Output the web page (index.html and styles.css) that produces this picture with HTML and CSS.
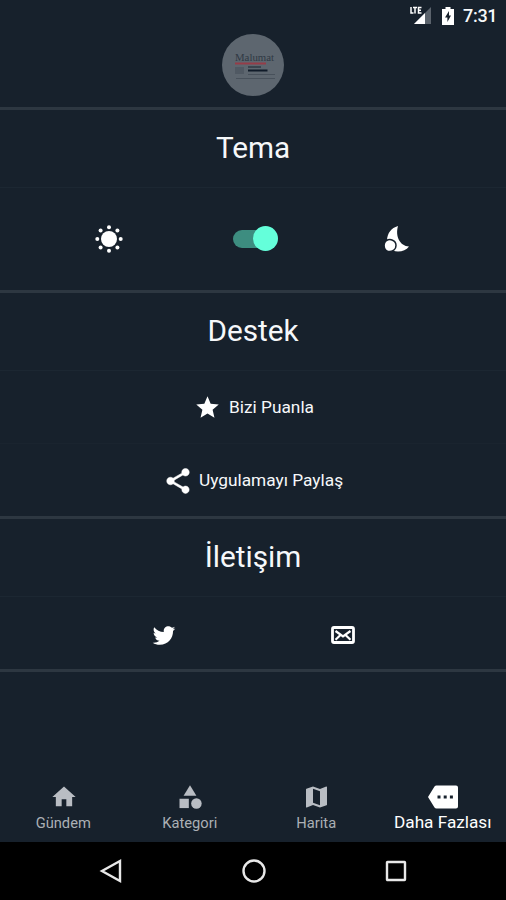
FILE: index.html
```html
<!DOCTYPE html>
<html lang="tr">
<head>
<meta charset="utf-8">
<title>Malumat</title>
<link rel="stylesheet" href="styles.css">
</head>
<body>
<div class="screen">
  <header class="statusbar">
    <svg class="signal" width="24" height="20" viewBox="0 0 24 20"><path fill="#5b636c" d="M22 1v17H5z"/><path fill="#fff" d="M16 7v11H5z"/><path d="M2.500 1v6.500h3M5 1.500h4M7 1.500v6.500M13 1.500h-3v6h3M10 4.500h2.500" fill="none" stroke="#17212c" stroke-width="3"/><path d="M2 1v6h2.500M4 1.500h4M6 1.500v6M12.500 1.500h-3v5.500h3M9.500 4.200h2.500" fill="none" stroke="#fff" stroke-width="1.500"/></svg>
    <svg class="battery" width="12" height="18" viewBox="0 0 12 18"><path fill="#fff" fill-rule="evenodd" d="M3.500 0h5v2H12v16H0V2h3.500zM7 4L3 10.500h2.400V15L9 8.500H7z"/></svg>
    <span class="clock">7:31</span>
  </header>
  <div class="brand">
    <svg width="64" height="64" viewBox="0 0 64 64"><circle cx="32" cy="32" r="31" fill="#5d666f"/><text class="brand-name" x="14" y="28" textLength="39" lengthAdjust="spacingAndGlyphs">Malumat</text><path d="M14 30.500h31" stroke="#963c48" stroke-width="2"/><path d="M14 34h9v7h-9z" fill="#505963"/><path d="M27 34h13" stroke="#28323d" stroke-width="1.300"/><path d="M27 37.500h19.500" stroke="#101b29" stroke-width="2"/><path d="M27 41.500h27M15 45.500h39" stroke="#48515b"/></svg>
  </div>
  <section class="theme">
    <h2>Tema</h2>
    <div class="theme-row">
      <svg width="30" height="30" viewBox="0 0 30 30" fill="#fff"><circle cx="15" cy="15" r="8"/><circle cx="15" cy="3.300" r="2"/><circle cx="15" cy="26.700" r="2"/><circle cx="3.300" cy="15" r="2"/><circle cx="26.700" cy="15" r="2"/><circle cx="6.600" cy="6.600" r="2"/><circle cx="23.400" cy="6.600" r="2"/><circle cx="6.600" cy="23.400" r="2"/><circle cx="23.400" cy="23.400" r="2"/></svg>
      <span class="switch"><i></i></span>
      <svg width="30" height="30" viewBox="0 0 30 30"><path fill="#fff" d="M16 2C9 4 5.500 9 5 16c0 7 4 11.500 11 11.500 4.500 0 8.500-1.500 11-5-9-.5-14-10-11-20.500z"/><path fill="#fff" stroke="#17212c" stroke-width="1.500" d="M4.500 16.500c3.500-2 9.500-.5 9.500 5 0 3.500-2.700 6-6 6-6.500 0-7.500-7.500-3.500-11z"/></svg>
    </div>
  </section>
  <section class="support">
    <h2>Destek</h2>
    <div class="link rate"><svg width="27" height="27" viewBox="0 0 24 24"><path fill="#fff" d="M12 17.270L18.180 21l-1.640-7.030L22 9.240l-7.190-.61L12 2 9.190 8.630 2 9.240l5.460 4.730L5.820 21z"/></svg><span class="rate-text">Bizi Puanla</span></div>
    <div class="link share"><svg width="30" height="30" viewBox="0 0 24 24"><path fill="#fff" stroke="#fff" stroke-width=".4" d="M18 16.080c-.76 0-1.440.3-1.960.77L8.910 12.700c.05-.23.09-.46.09-.7s-.04-.47-.09-.7l7.050-4.110c.54.5 1.250.81 2.040.81 1.660 0 3-1.340 3-3s-1.340-3-3-3-3 1.340-3 3c0 .24.04.47.09.7L8.040 9.810C7.500 9.310 6.790 9 6 9c-1.660 0-3 1.340-3 3s1.340 3 3 3c.79 0 1.500-.31 2.040-.81l7.120 4.160c-.05.21-.08.43-.08.65 0 1.610 1.310 2.920 2.920 2.920s2.920-1.310 2.920-2.920-1.310-2.920-2.920-2.920z"/></svg><span class="share-text">Uygulamayı Paylaş</span></div>
  </section>
  <section class="contact">
    <h2>İletişim</h2>
    <div class="contact-row">
      <svg width="26" height="26" viewBox="0 0 24 24"><path fill="#fff" d="M22.460 6c-.77.35-1.600.58-2.460.69.88-.53 1.560-1.370 1.880-2.380-.83.5-1.750.85-2.720 1.050C18.370 4.500 17.260 4 16 4c-2.350 0-4.270 1.920-4.270 4.290 0 .34.04.67.11.98C8.280 9.090 5.110 7.380 3 4.790c-.37.63-.58 1.370-.58 2.150 0 1.490.75 2.810 1.910 3.560-.71 0-1.370-.2-1.950-.5v.03c0 2.080 1.480 3.820 3.440 4.210a4.220 4.220 0 0 1-1.930.07 4.280 4.280 0 0 0 4 2.980 8.521 8.521 0 0 1-5.330 1.840c-.34 0-.68-.02-1.020-.06C3.440 20.290 5.700 21 8.120 21 16 21 20.330 14.460 20.330 8.790c0-.19 0-.37-.01-.56.84-.6 1.560-1.360 2.140-2.230z"/></svg>
      <svg width="26" height="20" viewBox="0 0 26 20"><rect x="2.500" y="2.500" width="21" height="15" rx="1.500" fill="none" stroke="#fff" stroke-width="2.800"/><path d="M5.500 6l7.500 5.500L20.500 6M5.500 14.800l5-4.800M20.500 14.800l-5-4.800" fill="none" stroke="#fff" stroke-width="2.200"/></svg>
    </div>
  </section>
  <nav class="tabs">
    <div class="tab"><svg width="28" height="28" viewBox="0 0 24 24"><path d="M10 20v-6h4v6h5v-8h3L12 3 2 12h3v8z"/></svg><span>Gündem</span></div>
    <div class="tab"><svg width="28" height="28" viewBox="0 0 24 24"><path d="M12 2l-5.500 9h11z"/><circle cx="17.500" cy="17.500" r="4.500"/><path d="M3 13.500h8v8H3z"/></svg><span>Kategori</span></div>
    <div class="tab"><svg width="31" height="31" viewBox="0 0 24 24"><path d="M20.500 3l-.16.030L15 5.100 9 3 3.360 4.900c-.21.070-.36.250-.36.480V20.500c0 .28.220.5.500.5l.16-.03L9 18.900l6 2.100 5.640-1.900c.21-.07.36-.25.36-.48V3.500c0-.28-.22-.5-.5-.5zM15 19l-6-2.110V5l6 2.110V19z"/></svg><span>Harita</span></div>
    <div class="tab active"><svg width="32" height="28" viewBox="0 0 32 28"><path fill-rule="evenodd" d="M9.500 2.500H29a2 2 0 0 1 2 2v19a2 2 0 0 1-2 2H9.500q-1.300 0-2-1L1 14l6.500-10.500q.7-1 2-1zM10.500 12.500v3h3v-3zm6.200 0v3h3v-3zm6.200 0v3h3v-3z"/></svg><span>Daha Fazlası</span></div>
  </nav>
  <footer class="system">
    <svg width="24" height="26" viewBox="0 0 24 26"><path d="M21 3v20L3 13z"/></svg>
    <svg width="26" height="26" viewBox="0 0 26 26"><circle cx="13" cy="13" r="10.500"/></svg>
    <svg width="24" height="26" viewBox="0 0 24 26"><rect x="3" y="4" width="18" height="18" rx=".5"/></svg>
  </footer>
</div>
</body>
</html>
```
FILE: styles.css
```css
* { box-sizing: border-box; }
body { margin: 0; background: #17212c; color: #f6f8fa; font-family: Roboto, sans-serif; }
svg { display: block; flex: none; }
.screen { width: 506px; height: 900px; display: flex; flex-direction: column; overflow: hidden; }
.statusbar { height: 32px; display: flex; align-items: center; justify-content: flex-end; padding-right: 9px; }
.signal { margin-right: 9px; }
.battery { margin-right: 9px; }
.clock { width: 34px; font-size: 18px; font-weight: 500; letter-spacing: -.3px; white-space: nowrap; padding-bottom: 1px; }
.brand { height: 75px; display: flex; justify-content: center; padding: 1px 0 0; }
.brand-name { font: 11px "Liberation Serif", serif; fill: #303944; }
section { border-top: 3px solid #2d3741; }
h2 { margin: 0; font-size: 29.700px; font-weight: 400; text-align: center; line-height: 76px; height: 78px; border-bottom: 1px solid #1c2732; }
.theme { height: 183px; }
.theme-row { height: 101px; padding: 1px 94px 0; display: flex; align-items: center; justify-content: space-between; }
.switch { width: 45px; height: 25px; margin: 0 0 1px 4px; display: flex; align-items: center; justify-content: flex-end; position: relative; }
.switch::before { content: ""; position: absolute; left: 0; top: 4px; width: 36px; height: 18px; border-radius: 9px; background: #3d8d80; }
.switch i { position: relative; width: 25px; height: 25px; border-radius: 50%; background: #64ffda; }
.support { height: 226px; }
.link { height: 73px; display: flex; align-items: center; justify-content: center; font-size: 17.300px; }
.rate { border-bottom: 1px solid #1a242f; padding-left: 2px; }
.rate-text { width: 85px; margin-left: 8px; padding-bottom: 1px; white-space: nowrap; }
.share-text { width: 144px; margin-left: 6px; padding-bottom: 1px; white-space: nowrap; }
.contact { height: 156px; border-bottom: 3px solid #2d3741; }
.contact-row { height: 73px; padding: 3px 150px 0 151px; display: flex; align-items: center; justify-content: space-between; }
.tabs { margin-top: auto; height: 62px; display: grid; grid-template-columns: repeat(4, 1fr); }
.tab { display: flex; flex-direction: column; align-items: center; color: #abb0b5; fill: #b9bdc3; font-size: 14.700px; white-space: nowrap; }
.tab svg { height: 28px; margin: 3px 0 0 1px; }
.tab span { line-height: 20px; margin-top: 2px; }
.tab.active { color: #fff; fill: #fff; font-size: 17.200px; }
.tab.active span { margin-top: 1px; }
.system { height: 58px; background: #000; padding: 0 98px 0 99px; display: flex; align-items: center; justify-content: space-between; }
.system svg { fill: none; stroke: #e8e8e8; stroke-width: 2.400; }
```
